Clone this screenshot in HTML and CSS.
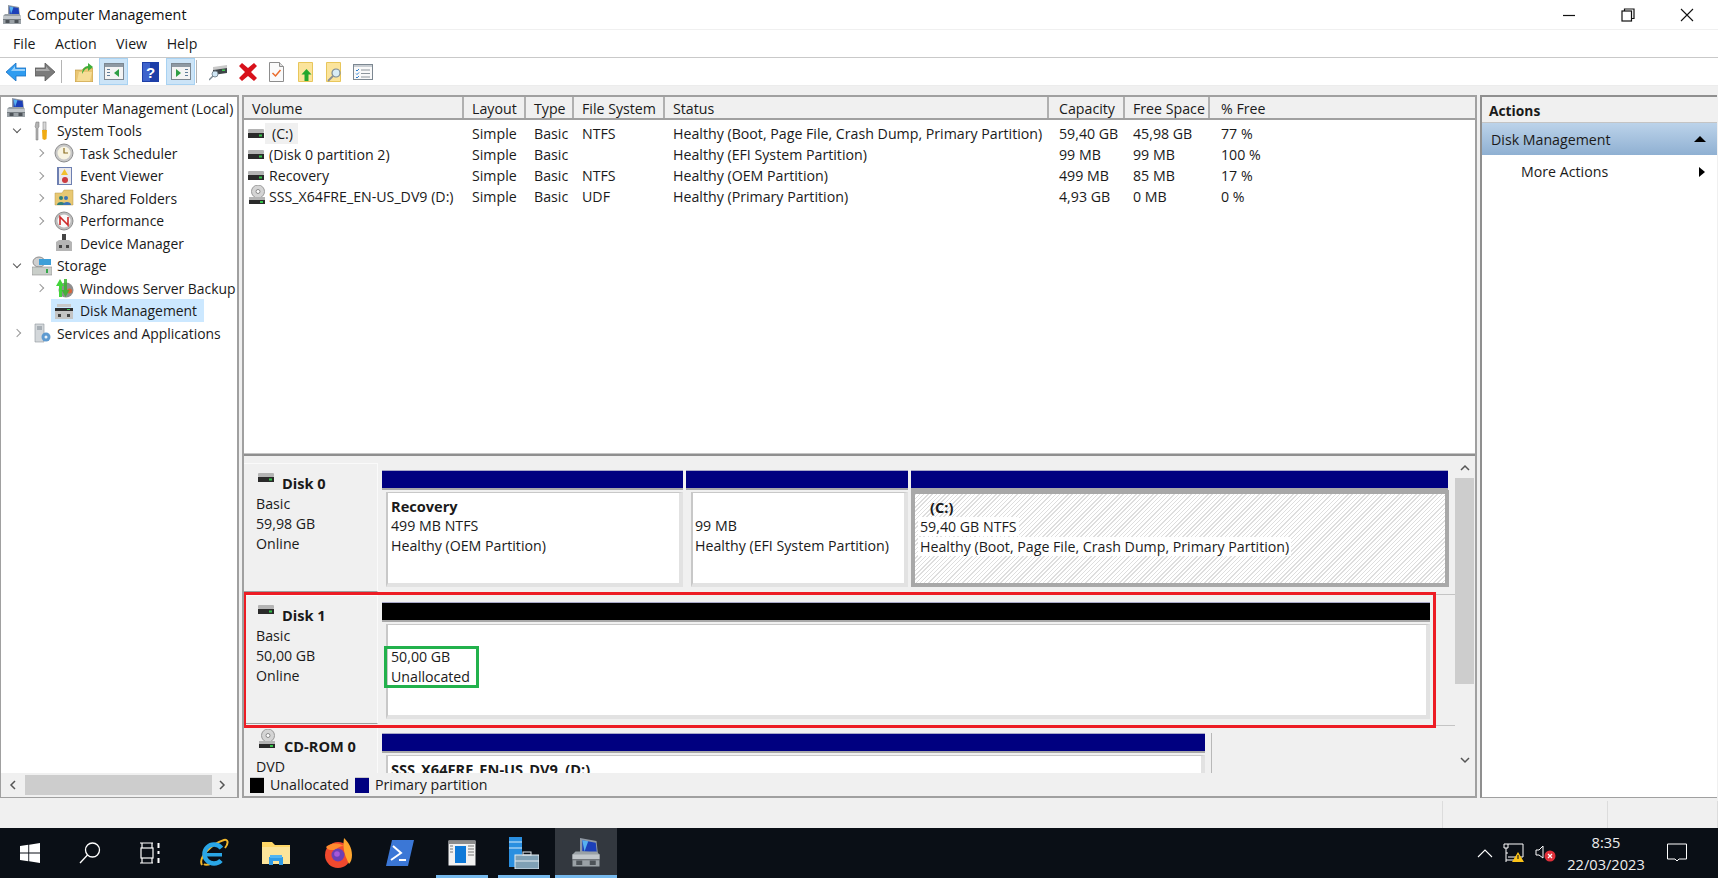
FILE: index.html
```html
<!DOCTYPE html>
<html lang="en">
<head>
  <meta charset="UTF-8">
  <title>Computer Management</title>
  <link rel="stylesheet" href="styles.css">
</head>
<body>
  <svg class="defs">
    <symbol id="drive" viewBox="0 0 16 10">
      <rect x="0" y="0" width="16" height="4" rx="1" fill="#b4b4b4"/>
      <rect x="0" y="4" width="16" height="5" fill="#2a2a2a"/>
      <rect x="11" y="5.5" width="3" height="2" fill="#35c44a"/>
    </symbol>
    <symbol id="cdrive" viewBox="0 0 18 20">
      <circle cx="10" cy="6.5" r="6.5" fill="#d4d4d4" stroke="#9a9a9a"/>
      <circle cx="10" cy="6.5" r="2" fill="#fff" stroke="#8a8a8a"/>
      <path d="M1 12h16v3H1z" fill="#b4b4b4"/>
      <rect x="1" y="15" width="16" height="4" fill="#2a2a2a"/>
      <rect x="12" y="16" width="3" height="2" fill="#35c44a"/>
    </symbol>
    <symbol id="compmgmt" viewBox="0 0 20 20">
      <path d="M6 0l11 2 1 9-12-1z" fill="#8f98a3"/>
      <path d="M7.500 1.500l9 1.600.7 6.700-9.700-.9z" fill="#1c3fb8"/>
      <path d="M7.500 1.500l4 .7L9 9z" fill="#57b0f0"/>
      <path d="M1 11l2-2h14l2 2v8H1z" fill="#9aa1a6"/>
      <path d="M1 11h18v3H1z" fill="#c2c7cb"/>
      <rect x="3.500" y="15" width="4" height="3" fill="#4d5358"/>
      <rect x="12.500" y="15" width="4" height="3" fill="#4d5358"/>
      <path d="M1 14.500h18" stroke="#5d6368" stroke-width=".6"/>
    </symbol>
  </svg>

  <div class="title-bar">
    <svg class="title-icon"><use href="#compmgmt"/></svg>
    <span class="title-text">Computer Management</span>
    <div class="win-controls">
      <svg width="14" height="14" viewBox="0 0 14 14"><path d="M1 7.500h12" stroke="#111" stroke-width="1.200"/></svg>
      <svg width="14" height="14" viewBox="0 0 14 14" fill="none" stroke="#111" stroke-width="1.200"><rect x="1" y="3" width="9.500" height="10"/><path d="M3.500 3V1H13v9.500h-2.500"/></svg>
      <svg width="14" height="14" viewBox="0 0 14 14"><path d="M1 1l12 12M13 1L1 13" stroke="#111" stroke-width="1.100"/></svg>
    </div>
  </div>

  <div class="menu-bar">
    <span>File</span><span>Action</span><span>View</span><span>Help</span>
  </div>

  <div class="tool-bar">
    <svg class="tb tb-back" viewBox="0 0 20 18"><path d="M10 0v5h10v8H10v5L0 9z" fill="#2f9cf0" stroke="#1b6fc0" stroke-width=".8"/><path d="M9 3v3h10v2H5z" fill="#9cd3fb"/></svg>
    <svg class="tb tb-fwd" viewBox="0 0 20 18"><path d="M10 0v5H0v8h10v5l10-9z" fill="#7b7b7b" stroke="#5c5c5c" stroke-width=".8"/><path d="M11 3v3H1v2h14z" fill="#aaa"/></svg>
    <i class="tb-sep"></i>
    <svg class="tb tb-up" viewBox="0 0 18 20"><path d="M0 8h7l2-2h9v14H0z" fill="#eac673" stroke="#b28f3c" stroke-width=".6"/><path d="M2 19l2-9h13l-2 9z" fill="#f6dd96"/><path d="M7 12c0-5 3-8 6-8V1l5 4-5 4V6c-2 0-4 2-6 6z" fill="#3fae3a"/></svg>
    <span class="tb-on tb-on-a">
      <svg class="tb-pane" viewBox="0 0 20 17"><rect x=".5" y=".5" width="19" height="16" fill="#f4f4f4" stroke="#7c8791"/><rect x="1" y="1" width="18" height="3" fill="#8e99a3"/><path d="M3 6h3v1H3zM3 9h3v1H3zM3 12h3v1H3z" fill="#5f7c99"/><path d="M15 6v8l-5-4z" fill="#2f9e44"/></svg>
    </span>
    <svg class="tb tb-help" viewBox="0 0 17 20"><rect width="17" height="20" fill="#1d3fa8"/><rect x="1" y="1" width="7" height="18" fill="#3e63cc"/><text x="8.500" y="16" class="tb-q">?</text></svg>
    <span class="tb-on tb-on-b">
      <svg class="tb-pane" viewBox="0 0 20 17"><rect x=".5" y=".5" width="19" height="16" fill="#f4f4f4" stroke="#7c8791"/><rect x="1" y="1" width="18" height="3" fill="#8e99a3"/><path d="M14 6h3v1h-3zM14 9h3v1h-3zM14 12h3v1h-3z" fill="#5f7c99"/><path d="M5 6v8l5-4z" fill="#2f9e44"/></svg>
    </span>
    <i class="tb-sep tb-sep-b"></i>
    <svg class="tb tb-conn" viewBox="0 0 20 18"><path d="M4 4l14-2v3L4 7z" fill="#c9c9c9"/><path d="M4 7l14-2v5L4 12z" fill="#3f4448"/><rect x="13" y="6.500" width="3" height="1.500" fill="#3cc94f"/><circle cx="6" cy="11" r="3" fill="#cfe6f5" stroke="#7d8a94"/><path d="M4 13l-4 4" stroke="#7d8a94" stroke-width="1.500"/></svg>
    <svg class="tb tb-x" viewBox="0 0 18 18"><path d="M3 0l6 5 6-5 3 3-6 6 6 6-3 3-6-5-6 5-3-3 6-6-6-6z" fill="#d8111b"/></svg>
    <svg class="tb tb-check" viewBox="0 0 15 20"><path d="M.5.500h10l4 4v15H.5z" fill="#fafafa" stroke="#8d8d8d"/><path d="M10.500.500v4h4" fill="#ddd" stroke="#8d8d8d"/><path d="M3.500 11l3 3 5-6" fill="none" stroke="#ea6b2a" stroke-width="1.500"/></svg>
    <svg class="tb tb-export" viewBox="0 0 15 20"><path d="M.5.500h14v19H.5z" fill="#fbe49c" stroke="#e8c65b"/><path d="M8.500 7l5 5.500h-3V19h-4v-6.500h-3z" fill="#23a72c"/></svg>
    <svg class="tb tb-find" viewBox="0 0 16 20"><path d="M.5.500h14v19H.5z" fill="#fbe49c" stroke="#e8c65b"/><circle cx="10" cy="11" r="4" fill="#d8ecf7" stroke="#7d8a94" stroke-width="1.200"/><path d="M7 14l-5 5" stroke="#8a8f93" stroke-width="1.800"/></svg>
    <svg class="tb tb-list" viewBox="0 0 20 16"><rect x=".5" y=".5" width="19" height="15" fill="#f9f9f9" stroke="#7c8791"/><rect x="1" y="1" width="18" height="2" fill="#c9ced3"/><path d="M3 6l1 1 2-2M3 9.500l1 1 2-2M3 13l1 1 2-2" fill="none" stroke="#2f80d0"/><path d="M8 6h9M8 9.500h9M8 13h9" stroke="#8d959c"/></svg>
  </div>

  <div class="content">
    <div class="tree">
      <div class="tree-row lv0"><svg class="ti"><use href="#compmgmt"/></svg><span>Computer Management (Local)</span></div>
      <div class="tree-row lv1"><b class="chev open"></b>
        <svg class="ti" viewBox="0 0 20 20"><path d="M4 1h3v5l-1 1v12H4V7L3 6z" fill="#b3b3b3" stroke="#777" stroke-width=".5"/><rect x="11" y="1" width="3" height="8" fill="#d8d8d8" stroke="#777" stroke-width=".5"/><path d="M10 9h5l-.5 9-2 1-2-1z" fill="#f0ab13"/></svg>
        <span>System Tools</span></div>
      <div class="tree-row lv2"><b class="chev"></b>
        <svg class="ti" viewBox="0 0 20 20"><circle cx="10" cy="10" r="9" fill="#c8c8c8" stroke="#8d8d8d"/><circle cx="10" cy="10" r="6.500" fill="#f8f4e2"/><path d="M10 5v5h4" fill="none" stroke="#8a6d1f" stroke-width="1.200"/></svg>
        <span>Task Scheduler</span></div>
      <div class="tree-row lv2"><b class="chev"></b>
        <svg class="ti" viewBox="0 0 20 20"><rect x="3" y="1" width="15" height="18" fill="#6d7fb1"/><rect x="5" y="2" width="12" height="16" fill="#e9e9ee"/><path d="M10.500 3l3.500 6H7z" fill="#f2c12e"/><circle cx="11" cy="14" r="3" fill="#cc3a3f"/></svg>
        <span>Event Viewer</span></div>
      <div class="tree-row lv2"><b class="chev"></b>
        <svg class="ti" viewBox="0 0 20 20"><path d="M1 5h7l2-3h9v15H1z" fill="#e8c873" stroke="#b89a4a" stroke-width=".5"/><circle cx="7" cy="10" r="2" fill="#2f7f7a"/><path d="M3 17c0-4 8-4 8 0z" fill="#2f7f7a"/><circle cx="12" cy="10" r="2" fill="#3a73b7"/><path d="M9 17c0-4 8-4 8 0z" fill="#3a73b7"/></svg>
        <span>Shared Folders</span></div>
      <div class="tree-row lv2"><b class="chev"></b>
        <svg class="ti" viewBox="0 0 20 20"><circle cx="10" cy="10" r="9" fill="#bdbdbd" stroke="#8d8d8d"/><circle cx="10" cy="10" r="6.500" fill="#fafafa"/><path d="M6 14V6l8 8V6" fill="none" stroke="#cf2a2a" stroke-width="1.600"/></svg>
        <span>Performance</span></div>
      <div class="tree-row lv2">
        <svg class="ti" viewBox="0 0 20 20"><rect x="8" y="1" width="4" height="8" fill="#444"/><path d="M2 9l3-2h10l3 2v9H2z" fill="#b5b5b5"/><rect x="5" y="12" width="3" height="3" fill="#444"/><rect x="12" y="12" width="3" height="3" fill="#444"/></svg>
        <span>Device Manager</span></div>
      <div class="tree-row lv1"><b class="chev open"></b>
        <svg class="ti" viewBox="0 0 20 20"><ellipse cx="7" cy="6" rx="6" ry="5" fill="#cfcfcf" stroke="#8d8d8d"/><rect x="7" y="3" width="12" height="6" fill="#3d9fd8"/><path d="M0 11h20v8H0z" fill="#c9cec9" stroke="#8d8d8d" stroke-width=".6"/><rect x="14" y="13" width="2" height="4" fill="#35a84a"/></svg>
        <span>Storage</span></div>
      <div class="tree-row lv2"><b class="chev"></b>
        <svg class="ti" viewBox="0 0 20 20"><circle cx="12" cy="12" r="7.500" fill="#8f8f8f"/><circle cx="15.500" cy="13" r="2.500" fill="#d6643a"/><path d="M5 19V8H2l4-7 4 7H8v11z" fill="#43d43a"/><path d="M10 1v11H7.500l4 7 4-7H13V1z" fill="#38b52f" opacity=".85"/></svg>
        <span>Windows Server Backup</span></div>
      <div class="tree-row lv2"><span class="selected">
        <svg class="ti" viewBox="0 0 20 20"><path d="M3 3h14v3H3z" fill="#c8c8c8"/><path d="M1 7h18v3H1z" fill="#2d2d2d"/><rect x="13" y="8" width="3" height="1" fill="#3cc94f"/><path d="M1 10h18v8H1z" fill="#c4c4c4"/><rect x="4" y="13" width="3" height="3" fill="#444"/><rect x="13" y="13" width="3" height="3" fill="#444"/></svg>
        <span>Disk Management</span></span></div>
      <div class="tree-row lv1"><b class="chev"></b>
        <svg class="ti" viewBox="0 0 20 20"><path d="M3 1h9v18H3z" fill="#d3d7da" stroke="#8d959c" stroke-width=".6"/><path d="M5 4h5M5 6h5" stroke="#7c8791"/><circle cx="14" cy="14" r="4.500" fill="#5d9ad0"/><circle cx="14" cy="14" r="1.500" fill="#e8f2fa"/></svg>
        <span>Services and Applications</span></div>
      <div class="tree-spacer"></div>
      <div class="h-scroll">
        <svg width="8" height="10" viewBox="0 0 8 10"><path d="M6 1L2 5l4 4" fill="none" stroke="#555" stroke-width="1.500"/></svg>
        <div class="h-thumb"></div>
        <svg width="8" height="10" viewBox="0 0 8 10"><path d="M2 1l4 4-4 4" fill="none" stroke="#555" stroke-width="1.500"/></svg>
      </div>
    </div>

    <div class="center">
      <div class="list">
        <div class="list-head row">
          <div class="c-vol">Volume</div><div class="c-lay">Layout</div><div class="c-typ">Type</div><div class="c-fs">File System</div><div class="c-sta">Status</div><div class="c-cap">Capacity</div><div class="c-fre">Free Space</div><div class="c-pct">% Free</div>
        </div>
        <div class="row">
          <div class="c-vol"><svg class="vi"><use href="#drive"/></svg><span class="focused">(C:)</span></div><div class="c-lay">Simple</div><div class="c-typ">Basic</div><div class="c-fs">NTFS</div><div class="c-sta">Healthy (Boot, Page File, Crash Dump, Primary Partition)</div><div class="c-cap">59,40 GB</div><div class="c-fre">45,98 GB</div><div class="c-pct">77 %</div>
        </div>
        <div class="row">
          <div class="c-vol"><svg class="vi"><use href="#drive"/></svg>(Disk 0 partition 2)</div><div class="c-lay">Simple</div><div class="c-typ">Basic</div><div class="c-fs"></div><div class="c-sta">Healthy (EFI System Partition)</div><div class="c-cap">99 MB</div><div class="c-fre">99 MB</div><div class="c-pct">100 %</div>
        </div>
        <div class="row">
          <div class="c-vol"><svg class="vi"><use href="#drive"/></svg>Recovery</div><div class="c-lay">Simple</div><div class="c-typ">Basic</div><div class="c-fs">NTFS</div><div class="c-sta">Healthy (OEM Partition)</div><div class="c-cap">499 MB</div><div class="c-fre">85 MB</div><div class="c-pct">17 %</div>
        </div>
        <div class="row">
          <div class="c-vol"><svg class="vi vi-cd"><use href="#cdrive"/></svg>SSS_X64FRE_EN-US_DV9 (D:)</div><div class="c-lay">Simple</div><div class="c-typ">Basic</div><div class="c-fs">UDF</div><div class="c-sta">Healthy (Primary Partition)</div><div class="c-cap">4,93 GB</div><div class="c-fre">0 MB</div><div class="c-pct">0 %</div>
        </div>
      </div>
      <div class="splitter"></div>

      <div class="graph">
        <div class="disks">
          <div class="disk">
            <div class="disk-label">
              <div class="disk-name"><svg class="di"><use href="#drive"/></svg>Disk 0</div>
              <div>Basic</div><div>59,98 GB</div><div>Online</div>
            </div>
            <div class="parts">
              <div class="part w-rec"><div class="bar navy"></div><div class="box"><strong>Recovery</strong><div>499 MB NTFS</div><div>Healthy (OEM Partition)</div></div></div>
              <div class="part w-efi"><div class="bar navy"></div><div class="box box-efi"><strong>&nbsp;</strong><div>99 MB</div><div>Healthy (EFI System Partition)</div></div></div>
              <div class="part w-c"><div class="bar navy"></div><div class="box box-c"><strong class="c-name">(C:)</strong><div><span class="on-white">59,40 GB NTFS</span></div><div><span class="on-white">Healthy (Boot, Page File, Crash Dump, Primary Partition)</span></div></div></div>
            </div>
          </div>
          <div class="disk">
            <div class="disk-label">
              <div class="disk-name"><svg class="di"><use href="#drive"/></svg>Disk 1</div>
              <div>Basic</div><div>50,00 GB</div><div>Online</div>
            </div>
            <div class="parts">
              <div class="part w-un"><div class="bar black"></div><div class="box box-un"><div>50,00 GB</div><div>Unallocated</div></div></div>
            </div>
          </div>
          <div class="disk">
            <div class="disk-label">
              <div class="disk-name"><svg class="di di-cd"><use href="#cdrive"/></svg>CD-ROM 0</div>
              <div>DVD</div>
            </div>
            <div class="parts">
              <div class="part w-cd"><div class="bar navy"></div><div class="box"><strong>SSS_X64FRE_EN-US_DV9&nbsp; (D:)</strong></div></div>
            </div>
          </div>
          <div class="mark-red"></div>
          <div class="mark-green"></div>
        </div>
        <div class="v-scroll">
          <svg width="10" height="8" viewBox="0 0 10 8"><path d="M1 6l4-4 4 4" fill="none" stroke="#555" stroke-width="1.500"/></svg>
          <div class="v-thumb"></div>
          <svg class="v-down" width="10" height="8" viewBox="0 0 10 8"><path d="M1 2l4 4 4-4" fill="none" stroke="#555" stroke-width="1.500"/></svg>
        </div>
      </div>

      <div class="legend">
        <i class="swatch black"></i><span>Unallocated</span>
        <i class="swatch navy"></i><span>Primary partition</span>
      </div>
    </div>

    <div class="actions">
      <div class="actions-head">Actions</div>
      <div class="actions-group">Disk Management<i class="tri-up"></i></div>
      <div class="actions-item">More Actions<i class="tri-right"></i></div>
    </div>
  </div>

  <div class="status-bar">
    <div class="st-a"></div><div class="st-b"></div><div class="st-c"></div>
  </div>

  <div class="taskbar">
    <div class="task task-plain">
      <svg width="20" height="20" viewBox="0 0 20 20" fill="#fff"><path d="M0 3l8.300-1.200v7.700H0zM9.200 1.700L20 0v9.500H9.200zM0 10.500h8.300v7.700L0 17zM9.200 10.500H20V20L9.200 18.300z"/></svg>
    </div>
    <div class="task task-plain">
      <svg width="22" height="22" viewBox="0 0 22 22" fill="none" stroke="#fff" stroke-width="1.300"><circle cx="13.500" cy="8" r="7"/><path d="M8.500 13L1 21"/></svg>
    </div>
    <div class="task task-plain">
      <svg width="20" height="22" viewBox="0 0 20 22" fill="none" stroke="#fff" stroke-width="1.200"><path d="M0 1h13M0 21h13"/><rect x="1" y="6" width="12" height="10"/><path d="M2 1v5M12 1v5M2 16v5M12 16v5"/><path d="M18.500 1v5M18.500 9v3M18.500 16v5" stroke-width="2"/></svg>
    </div>
    <div class="task task-ie">
      <svg width="30" height="30" viewBox="0 0 30 30"><path d="M3 27C-1 20 12 6 25 2c4-1 5 3 1 8" fill="none" stroke="#f1b72c" stroke-width="2"/><path d="M5 26c2 2 6 0 8-1" fill="none" stroke="#f1b72c" stroke-width="2"/><circle cx="15" cy="16" r="9.500" fill="none" stroke="#2aa6e6" stroke-width="4.500" stroke-dasharray="46 14" stroke-dashoffset="-7"/><path d="M7 15h16v3.500H7z" fill="#2aa6e6"/></svg>
    </div>
    <div class="task">
      <svg width="28" height="26" viewBox="0 0 28 26"><path d="M0 2h10l3 3h15v18H0z" fill="#ffd767"/><path d="M0 7h28v17H0z" fill="#fce49a"/><path d="M7 25V17h14v8h-4v-4h-6v4z" fill="#2f9be6"/><rect x="8" y="15" width="12" height="3" fill="#52b5f2"/></svg>
    </div>
    <div class="task">
      <svg width="28" height="30" viewBox="0 0 28 30"><circle cx="14" cy="17" r="13" fill="#f0492e"/><path d="M20 0c4 4 8 9 8 17 0 4-1 7-3 9-3-7-7-13-5-26z" fill="#ffa62f"/><path d="M2 9c4-4 12-5 18-1-4 0-7 2-8 4-4 0-8 1-10-3z" fill="#ff8b2e"/><circle cx="14" cy="17" r="6.500" fill="#6c3fb5"/><circle cx="13" cy="16" r="2.800" fill="#a657d8"/></svg>
    </div>
    <div class="task">
      <svg width="28" height="26" viewBox="0 0 28 26"><path d="M6 0h22l-6 26H0z" fill="#3b77d6"/><path d="M7 6l8 7-10 7" fill="none" stroke="#fff" stroke-width="2"/><path d="M13 20h7" stroke="#fff" stroke-width="2"/></svg>
    </div>
    <div class="task active-app">
      <svg width="28" height="26" viewBox="0 0 28 26"><rect x=".5" y=".5" width="27" height="25" fill="#f1f1f1"/><rect x="1" y="1" width="26" height="3" fill="#8c8c8c"/><rect x="7" y="6" width="11" height="17" fill="#0e79d8"/><path d="M2 6h3M2 9h3M2 12h3M20 6h6M20 9h6M20 12h6M20 15h6" stroke="#777"/></svg>
    </div>
    <div class="task active-app">
      <svg width="30" height="32" viewBox="0 0 30 32"><rect x="0" y="0" width="13" height="30" fill="#2a8fe0"/><path d="M0 5h13M0 11h13" stroke="#d7ecfb"/><rect x="6" y="18" width="24" height="14" fill="#7fa0b5" stroke="#e6edf2"/><path d="M6 24h24" stroke="#e6edf2"/><rect x="14" y="15" width="8" height="3" fill="none" stroke="#e6edf2"/></svg>
    </div>
    <div class="task active-app current">
      <svg width="30" height="30" viewBox="0 0 20 20"><use href="#compmgmt"/></svg>
    </div>
    <div class="tray">
      <svg width="16" height="10" viewBox="0 0 16 10"><path d="M1 9l7-7 7 7" fill="none" stroke="#fff" stroke-width="1.100"/></svg>
      <svg class="tray-net" width="22" height="20" viewBox="0 0 22 20"><path d="M1 1h19v13H5M1 1v4h4V1M3 5v14M3 10h2M3 17h8" fill="none" stroke="#fff" stroke-width="1"/><path d="M15 9l6 10H9z" fill="#fcc419"/><path d="M15 12v4" stroke="#222" stroke-width="1.200"/></svg>
      <svg class="tray-vol" width="21" height="20" viewBox="0 0 21 20"><path d="M1 7h3l4-4v12L4 12H1z" fill="none" stroke="#fff" stroke-width="1"/><circle cx="15" cy="13" r="5.500" fill="#e0303a"/><path d="M13 11l4 4M17 11l-4 4" stroke="#fff" stroke-width="1.200"/></svg>
      <div class="clock"><div>8:35</div><div>22/03/2023</div></div>
      <svg class="tray-note" width="20" height="20" viewBox="0 0 20 20"><path d="M.5 1h19v15H12l-2 2-2-2H.5z" fill="none" stroke="#fff" stroke-width="1"/></svg>
    </div>
  </div>
</body>
</html>
```

FILE: styles.css
```css
* {
  box-sizing: border-box;
}
body {
  margin: 0;
  width: 1718px;
  height: 878px;
  overflow: hidden;
  background: #f0f0f0;
  font-family: "Open Sans", "Noto Sans", sans-serif;
  font-size: 14.200px;
  color: #1a1a1a;
}
.defs {
  display: none;
}

/* window chrome */
.title-bar {
  height: 29px;
  background: #fff;
  display: flex;
  align-items: center;
  padding-left: 2px;
}
.title-icon {
  width: 20px;
  height: 20px;
}
.title-text {
  margin-left: 5px;
  font-size: 14.300px;
  color: #111;
}
.win-controls {
  margin-left: auto;
  display: flex;
  gap: 45px;
  padding-right: 24px;
}
.menu-bar {
  height: 29px;
  background: #fff;
  border-bottom: 1px solid #c9c9c9;
  border-top: 1px solid #f0f0f0;
  display: flex;
  align-items: center;
  padding-left: 13px;
  gap: 19.500px;
}
.tool-bar {
  height: 28px;
  background: #fff;
  position: relative;
  display: flex;
  align-items: center;
  border-bottom: 1px solid #ececec;
}
.tb {
  flex: none;
  display: block;
}
.tb-back { width: 20px; height: 18px; margin-left: 6px; }
.tb-fwd { width: 20px; height: 18px; margin-left: 9px; }
.tb-sep { width: 1px; height: 23px; background: #b4b4b4; margin-left: 6px; }
.tb-sep-b { margin-left: 1px; }
.tb-up { width: 18px; height: 20px; margin-left: 13px; }
.tb-on {
  width: 29px;
  height: 27px;
  background: #cce4f7;
  border: 1px solid #a8d2f2;
  display: flex;
  align-items: center;
  justify-content: center;
  flex: none;
}
.tb-on-a { margin-left: 6px; }
.tb-on-b { margin-left: 7px; }
.tb-pane { width: 20px; height: 17px; }
.tb-help { width: 17px; height: 20px; margin-left: 14px; }
.tb-q {
  font: bold 15px "Liberation Sans", sans-serif;
  fill: #fff;
  text-anchor: middle;
}
.tb-conn { width: 20px; height: 18px; margin-left: 12px; }
.tb-x { width: 18px; height: 18px; margin-left: 10px; }
.tb-check { width: 15px; height: 20px; margin-left: 12px; }
.tb-export { width: 15px; height: 20px; margin-left: 14px; }
.tb-find { width: 16px; height: 20px; margin-left: 13px; }
.tb-list { width: 20px; height: 16px; margin-left: 11px; }

.content {
  height: 703px;
  margin-top: 9px;
  display: flex;
}

/* left tree */
.tree {
  width: 239px;
  background: #fff;
  border-top: 2px solid #a0a0a0;
  border-left: 1px solid #a0a0a0;
  border-right: 2px solid #a0a0a0;
  border-bottom: 1px solid #a0a0a0;
  display: flex;
  flex-direction: column;
  overflow: hidden;
  font-size: 13.900px;
}
.tree-row {
  height: 22.500px;
  flex: none;
  display: flex;
  align-items: center;
  white-space: nowrap;
}
.ti {
  width: 20px;
  height: 20px;
  flex: none;
}
.chev {
  width: 6px;
  height: 6px;
  flex: none;
  border-right: 1.200px solid #9a9a9a;
  border-top: 1.200px solid #9a9a9a;
  transform: rotate(45deg);
}
.chev.open {
  border-color: #555;
  transform: translateY(-2px) rotate(135deg);
}
.lv0 { padding-left: 5px; }
.lv0 .ti { margin-right: 7px; }
.lv1 { padding-left: 13px; }
.lv1 .ti { margin-left: 12px; margin-right: 5px; }
.lv2 { padding-left: 36px; }
.lv2 .chev + .ti { margin-left: 11px; }
.lv2 > .ti { margin-left: 17px; }
.lv2 .ti { margin-right: 6px; }
.selected {
  margin-left: 14px;
  padding-left: 3px;
  height: 23px;
  width: 153px;
  background: #cce8ff;
  display: flex;
  align-items: center;
}
.tree-spacer {
  flex: 1;
}
.h-scroll {
  height: 24px;
  flex: none;
  display: flex;
  align-items: center;
  gap: 6px;
  padding: 0 8px;
  background: #f0f0f0;
}
.h-thumb {
  width: 187px;
  height: 20px;
  background: #cdcdcd;
  margin-left: 2px;
}

/* volume list */
.center {
  width: 1235px;
  margin-left: 3px;
  border-top: 2px solid #a0a0a0;
  border-left: 2px solid #a0a0a0;
  border-right: 2px solid #a0a0a0;
  border-bottom: 1px solid #a0a0a0;
  display: flex;
  flex-direction: column;
}
.list {
  height: 356px;
  background: #fff;
  flex: none;
}
.row {
  display: flex;
  height: 21px;
  align-items: center;
  white-space: nowrap;
}
.list-head {
  height: 23px;
  margin-bottom: 3px;
  background: #f0f0f0;
  border-bottom: 2px solid #a0a0a0;
}
.list-head > div {
  height: 100%;
  display: flex;
  align-items: center;
  border-right: 2px solid #b0b0b0;
  padding-top: 2px;
}
.list-head > div:last-child {
  border-right: 0;
}
.row > div {
  padding-left: 8px;
  flex: none;
}
.c-vol { width: 220px; display: flex; align-items: center; }
.c-lay { width: 62px; }
.c-typ { width: 48px; }
.c-fs { width: 91px; }
.c-sta { width: 384px; }
.c-cap { width: 76px; }
.c-fre { width: 85px; }
.c-pct { width: 262px; }
.row > .c-vol { padding-left: 4px; }
.list-head > .c-vol { padding-left: 8px; }
.row > .c-cap { padding-left: 10px; }
.row > .c-pct { padding-left: 11px; }
.vi {
  width: 16px;
  height: 10px;
  flex: none;
  margin-right: 5px;
}
.vi-cd {
  height: 20px;
  width: 18px;
  margin-right: 3px;
  margin-top: -3px;
}
.focused {
  background: #f0f0f0;
  padding: 1px 5px 1px 7px;
  margin-left: -4px;
}

/* disk map */
.splitter {
  height: 3px;
  flex: none;
  background: #8f8f8f;
  border-top: 1px solid #c4c4c4;
}
.graph {
  flex: 1;
  min-height: 0;
  display: flex;
  background: #f0f0f0;
}
.disks {
  width: 1211px;
  padding-top: 7px;
  overflow: hidden;
  position: relative;
}
.disk {
  height: 131.500px;
  display: flex;
}
.disk-label {
  width: 134px;
  height: 129px;
  flex: none;
  padding: 10px 0 0 12px;
  line-height: 20px;
  border-top: 1px solid #fafafa;
  border-right: 1px solid #fafafa;
  border-bottom: 1px solid #9f9f9f;
}
.disk-name {
  font-weight: 700;
  font-size: 14.600px;
  display: flex;
  align-items: center;
  gap: 8px;
  margin: -1px 0 1px 2px;
}
.di {
  width: 16px;
  height: 10px;
  margin-top: -10px;
}
.di-cd {
  width: 18px;
  height: 20px;
  margin-top: -14px;
}
.parts {
  flex: 1;
  display: flex;
  gap: 3px;
  padding: 7px 0 0 4px;
  border-bottom: 1px solid #c4c4c4;
}
.part {
  height: 117px;
  flex: none;
}
.w-rec { width: 301px; }
.w-efi { width: 222px; }
.w-c { width: 537px; }
.w-un { width: 1048px; }
.w-cd {
  width: 830px;
  padding-right: 6px;
  border-right: 1px solid #b8b8b8;
}
.bar {
  height: 20px;
  border-top: 1px solid #a8a8c8;
  border-bottom: 2px solid #a8a8a8;
}
.navy { background: #000080; }
.black { background: #000; }
.swatch.navy, .swatch.black {
  border-bottom: 0;
}
.box {
  margin-top: 2px;
  margin-left: 4px;
  height: 95px;
  padding: 3px 0 0 3px;
  background: #fff;
  line-height: 20px;
  border-top: 1px solid #c8c8c8;
  border-left: 2px solid #c8c8c8;
  border-bottom: 4px solid #e2e2e2;
  border-right: 4px solid #e2e2e2;
  white-space: nowrap;
}
.box strong {
  display: block;
  font-size: 14.600px;
}
.box-efi {
  padding-left: 2px;
  margin-left: 5px;
}
.box-c {
  margin: 0 -1px 0 0;
  height: 97px;
  border: 4px solid #a8a8a8;
  padding: 3px 0 0 5px;
  background: repeating-linear-gradient(135deg, #dedede 0 1px, #fff 1px 3px);
}
.c-name {
  padding-left: 10px;
}
.on-white {
  background: #fff;
  padding: 0 2px;
  margin-left: -2px;
}
.box-un {
  padding-top: 22px;
}
.mark-red {
  position: absolute;
  left: -1px;
  top: 136px;
  width: 1193px;
  height: 136px;
  border: 3px solid #ed1c24;
}
.mark-green {
  position: absolute;
  left: 140px;
  top: 190px;
  width: 95px;
  height: 42px;
  border: 3px solid #22b14c;
}
.v-scroll {
  width: 19px;
  display: flex;
  flex-direction: column;
  align-items: center;
  padding-top: 8px;
}
.v-thumb {
  width: 19px;
  height: 206px;
  flex: none;
  margin-top: 6px;
  background: #cdcdcd;
}
.v-down {
  margin-top: 72px;
}
.legend {
  height: 24px;
  flex: none;
  display: flex;
  align-items: center;
  border-bottom: 1px solid #a0a0a0;
  padding-left: 6px;
}
.swatch {
  width: 14px;
  height: 16px;
  margin-right: 6px;
  border-top: 1px solid #c8c8c8;
}
.legend span {
  margin-right: 6px;
}

/* actions pane */
.actions {
  width: 237px;
  margin-left: 3px;
  background: #fff;
  border-top: 2px solid #8f8f8f;
  border-left: 2px solid #8f8f8f;
  border-bottom: 1px solid #a0a0a0;
}
.actions-head {
  height: 26px;
  padding: 2px 0 0 7px;
  display: flex;
  align-items: center;
  background: #f0f0f0;
  font-weight: 700;
  font-size: 13.800px;
  border-bottom: 1px solid #c4c4c4;
}
.actions-group {
  height: 32px;
  display: flex;
  align-items: center;
  justify-content: space-between;
  padding: 0 11px 0 9px;
  background: linear-gradient(#bcd3ea, #8fb0d2);
}
.actions-item {
  height: 33px;
  display: flex;
  align-items: center;
  justify-content: space-between;
  padding: 0 12px 0 39px;
}
.tri-up {
  width: 0;
  height: 0;
  border-left: 6px solid transparent;
  border-right: 6px solid transparent;
  border-bottom: 6px solid #000;
}
.tri-right {
  width: 0;
  height: 0;
  border-top: 5px solid transparent;
  border-bottom: 5px solid transparent;
  border-left: 6px solid #000;
}

/* status + taskbar */
.status-bar {
  height: 30px;
  display: flex;
  padding-top: 3px;
}
.status-bar div {
  border-right: 1px solid #dcdcdc;
}
.st-a { width: 1443px; }
.st-b { width: 165px; }
.st-c { flex: 1; border-right: 0; }
.taskbar {
  height: 50px;
  background: #0a0f16;
  display: flex;
  position: relative;
}
.task {
  width: 62px;
  height: 50px;
  flex: none;
  display: flex;
  align-items: center;
  justify-content: center;
  position: relative;
}
.task-plain {
  width: 60px;
}
.task-ie {
  margin-left: 3px;
}
.active-app::after {
  content: "";
  position: absolute;
  left: 5px;
  right: 5px;
  bottom: 0;
  height: 3px;
  background: #76b9ed;
}
.current {
  background: #33383f;
}
.current::after {
  left: 0;
  right: 0;
}
.tray {
  margin-left: auto;
  display: flex;
  align-items: center;
  color: #eee;
  padding-right: 31px;
}
.tray-net { margin-left: 10px; }
.tray-vol { margin-left: 10px; }
.clock {
  width: 100px;
  text-align: center;
  line-height: 22px;
  font-size: 14.600px;
}
.tray-note { margin-left: 11px; }
```
